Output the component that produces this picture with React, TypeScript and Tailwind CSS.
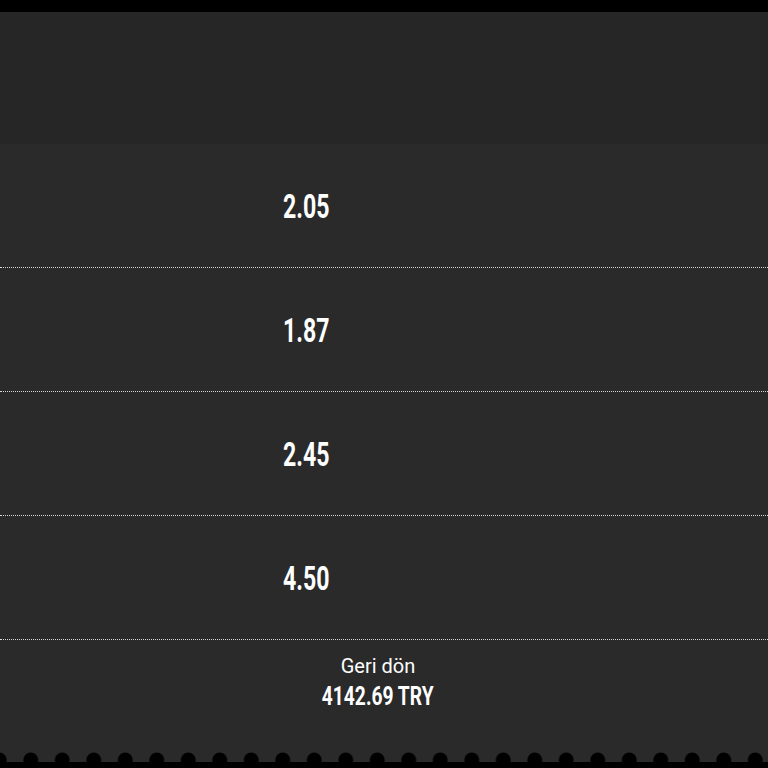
import React from "react";

const odds = ["2.05", "1.87", "2.45", "4.50"];

function Scallops() {
  return (
    <svg className="block w-full h-[17px]" viewBox="0 0 768 17" preserveAspectRatio="none">
      <defs>
        <pattern id="scallop" x="-16.5" y="0" width="31.5" height="17" patternUnits="userSpaceOnUse">
          <circle cx="15.75" cy="9" r="7.5" fill="#000" />
        </pattern>
      </defs>
      <rect x="0" y="0" width="768" height="17" fill="#2a2a2a" />
      <rect x="0" y="0" width="768" height="17" fill="url(#scallop)" />
      <rect x="0" y="11" width="768" height="6" fill="#000" />
    </svg>
  );
}

export default function App() {
  return (
    <div className="w-[768px] h-[768px] bg-black overflow-hidden font-['Roboto',sans-serif] text-white">
      <div className="h-3 bg-black" />
      <div className="h-[132px] bg-[#262626]" />
      <div className="bg-[#2a2a2a]">
        {odds.map((o) => (
          <div key={o} className="h-[124px] flex items-center border-b border-dotted border-[#d8d8d8]">
            <div className="w-[612px] text-center pt-[3px]">
              <span className="inline-block text-[33px] leading-none font-bold scale-x-[0.7]">{o}</span>
            </div>
          </div>
        ))}
        <div className="h-[111px] flex flex-col items-center pt-[14px]">
          <div className="text-[20px] leading-6 mr-[12px]">Geri dön</div>
          <div className="text-[25px] leading-8 font-bold mr-[12px] mt-[3px] scale-x-[0.77]">4142.69 TRY</div>
        </div>
      </div>
      <Scallops />
    </div>
  );
}
